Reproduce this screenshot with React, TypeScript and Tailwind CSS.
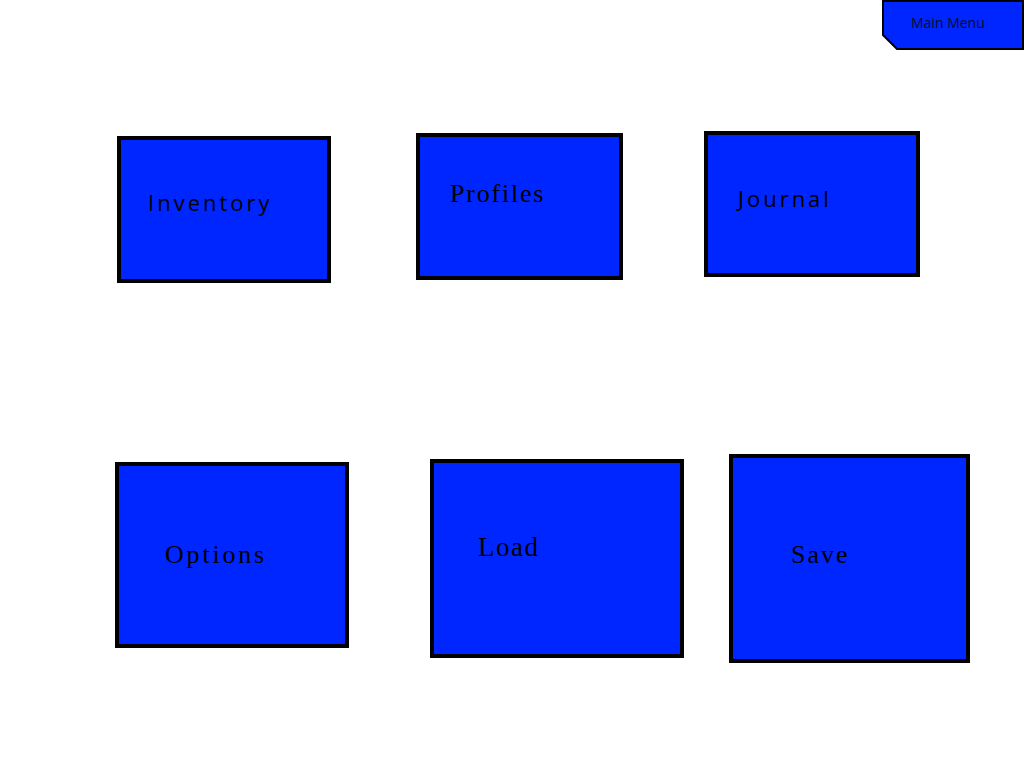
import React from 'react';

type Tile = {
  label: string;
  box: string;
  text: string;
};

const serif = "font-['Liberation_Serif',serif]";
const sans = "font-['Open_Sans',sans-serif]";

const topRow: Tile[] = [
  { label: 'Inventory', box: 'ml-[117px] mt-[5px] w-[214px] h-[147px] pl-[27px] pt-[51px]', text: `${sans} text-[22px] tracking-[3px]` },
  { label: 'Profiles', box: 'ml-[85px] mt-[2px] w-[207px] h-[147px] pl-[30px] pt-[44px]', text: `${serif} text-[26px] tracking-[1.8px]` },
  { label: 'Journal', box: 'ml-[81px] mt-0 w-[216px] h-[146px] pl-[30px] pt-[52px]', text: `${sans} text-[22px] tracking-[3px]` },
];

const bottomRow: Tile[] = [
  { label: 'Options', box: 'ml-[115px] mt-[8px] w-[234px] h-[186px] pl-[46px] pt-[76px]', text: `${serif} text-[26px] tracking-[2.8px]` },
  { label: 'Load', box: 'ml-[81px] mt-[5px] w-[254px] h-[199px] pl-[44px] pt-[71px]', text: `${serif} text-[27px] tracking-[1.5px]` },
  { label: 'Save', box: 'ml-[45px] mt-0 w-[241px] h-[209px] pl-[58px] pt-[84px]', text: `${serif} text-[26px] tracking-[2px]` },
];

function MenuTile({ tile }: { tile: Tile }) {
  return (
    <div className={`${tile.box} shrink-0 border-4 border-black bg-[#0026ff]`}>
      <span className={`${tile.text} block leading-none text-black`}>{tile.label}</span>
    </div>
  );
}

export default function App() {
  return (
    <div className="w-[1024px] h-[768px] bg-white overflow-hidden flex flex-col">
      <div className="flex justify-end">
        <div className="relative w-[142px] h-[50px] flex items-center pl-[29px]">
          <svg className="absolute inset-0" width="142" height="50" viewBox="0 0 142 50">
            <polygon points="1,1 141,1 141,49 15,49 1,35" fill="#0026ff" stroke="#000" strokeWidth="2" />
          </svg>
          <span className="relative pb-[5px] font-['Open_Sans',sans-serif] text-[14px] text-[#0a0a2a]">
            Main Menu
          </span>
        </div>
      </div>

      <div className="flex items-start mt-[81px]">
        {topRow.map((t) => (
          <MenuTile key={t.label} tile={t} />
        ))}
      </div>

      <div className="flex items-start mt-[171px]">
        {bottomRow.map((t) => (
          <MenuTile key={t.label} tile={t} />
        ))}
      </div>
    </div>
  );
}
